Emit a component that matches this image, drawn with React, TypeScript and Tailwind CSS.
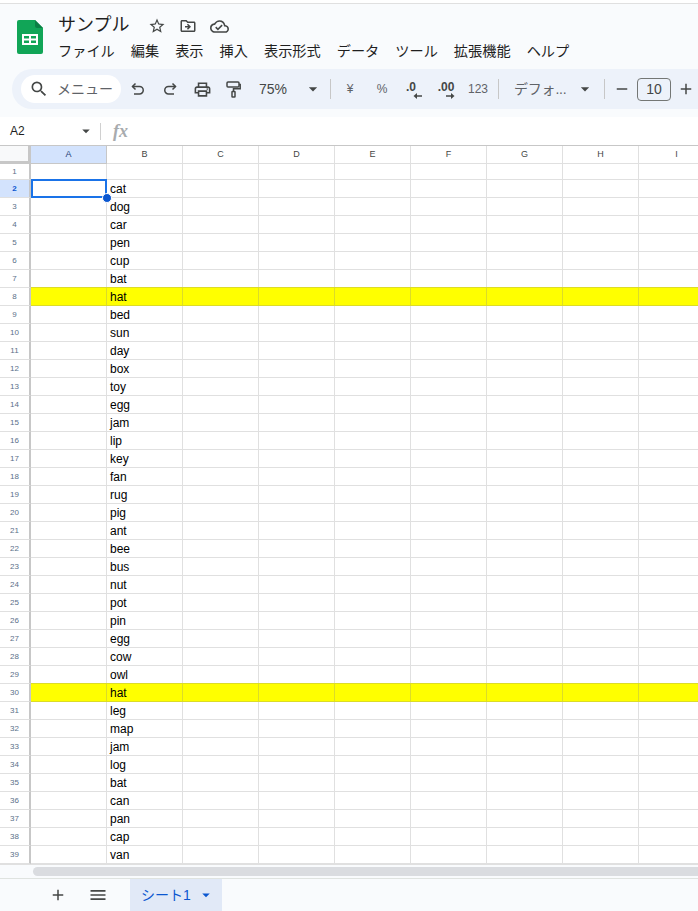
import React from 'react';
import {
  MdAdd,
  MdArrowDropDown,
  MdMenu,
  MdOutlineCloudDone,
  MdOutlineDriveFileMove,
  MdOutlineLocalPrintshop,
  MdRemove,
  MdSearch,
  MdStarBorder,
} from 'react-icons/md';

const words = [
  '', 'cat', 'dog', 'car', 'pen', 'cup', 'bat', 'hat', 'bed', 'sun', 'day', 'box', 'toy',
  'egg', 'jam', 'lip', 'key', 'fan', 'rug', 'pig', 'ant', 'bee', 'bus', 'nut', 'pot', 'pin',
  'egg', 'cow', 'owl', 'hat', 'leg', 'map', 'jam', 'log', 'bat', 'can', 'pan', 'cap', 'van',
];
const cols = ['C', 'D', 'E', 'F', 'G', 'H', 'I'];
const menus = ['ファイル', '編集', '表示', '挿入', '表示形式', 'データ', 'ツール', '拡張機能', 'ヘルプ'];

function SheetsLogo() {
  return (
    <svg width="26" height="34" viewBox="0 0 26 34" className="shrink-0">
      <path d="M2 0h16l8 8v24a2 2 0 0 1-2 2H2a2 2 0 0 1-2-2V2a2 2 0 0 1 2-2z" fill="#11a557" />
      <path d="M18 0l8 8h-6a2 2 0 0 1-2-2z" fill="#0b7f45" />
      <path d="M5 14h16v11H5z M7 16v2.500h5V16z M14 16v2.500h5V16z M7 20.500v2.500h5v-2.500z M14 20.500v2.500h5v-2.500z" fill="#fff" fillRule="evenodd" />
    </svg>
  );
}

function UndoIcon({ flip }: { flip?: boolean }) {
  return (
    <svg width="14" height="14" viewBox="0 0 14 14" fill="none" stroke="#444746" strokeWidth="1.500" className={flip ? '-scale-x-100' : ''}>
      <path d="M4.500 1.500 1.500 4.500l3 3" />
      <path d="M1.500 4.500h7a3.500 3.500 0 0 1 0 7.500H3" />
    </svg>
  );
}

function RollerIcon() {
  return (
    <svg width="16" height="17" viewBox="0 0 16 17" fill="none" stroke="#444746" strokeWidth="1.500">
      <rect x="1" y="1" width="12" height="5" rx="1" />
      <path d="M13 3.500h1.200v4.300H7.500v2.500" />
      <rect x="6" y="10.500" width="3" height="5.500" rx="0.500" />
    </svg>
  );
}

function ToolIcon({ children }: { children: React.ReactNode }) {
  return <div className="w-8 h-7 flex items-center justify-center text-[#444746] shrink-0">{children}</div>;
}

function Divider() {
  return <div className="w-px h-5 bg-[#c7c7c7] shrink-0" />;
}

function Toolbar() {
  return (
    <div className="ml-3 h-10 bg-[#edf2fa] rounded-l-[20px] flex items-center pl-[9px] text-[#444746] overflow-hidden">
      <div className="w-[100px] h-7 bg-white rounded-full flex items-center pl-[8px] shrink-0">
        <MdSearch size={20} />
        <span className="ml-[8px] text-[14px] text-[#5f6368] whitespace-nowrap">メニュー</span>
      </div>
      <div className="w-px shrink-0" />
      <ToolIcon><UndoIcon /></ToolIcon>
      <ToolIcon><UndoIcon flip /></ToolIcon>
      <ToolIcon><MdOutlineLocalPrintshop size={19} /></ToolIcon>
      <ToolIcon><RollerIcon /></ToolIcon>
      <div className="w-[80px] flex items-center shrink-0 pl-[9px]">
        <span className="text-[14px] w-[44px]">75%</span>
        <MdArrowDropDown size={20} />
      </div>
      <Divider />
      <div className="w-[3px] shrink-0" />
      <ToolIcon><span className="text-[12px] text-[#5f6368]">¥</span></ToolIcon>
      <ToolIcon><span className="text-[12px] text-[#5f6368]">%</span></ToolIcon>
      <ToolIcon>
        <span className="relative text-[12px] font-bold leading-none -mt-[5px] -ml-[6px] text-[#444746]">
          .0
          <svg width="9" height="6" viewBox="0 0 9 6" className="absolute left-[7px] top-[12px]">
            <path d="M9 3H3" stroke="#444746" strokeWidth="1.500" />
            <path d="M4 0 0.500 3 4 6z" fill="#444746" />
          </svg>
        </span>
      </ToolIcon>
      <ToolIcon>
        <span className="relative text-[12px] font-bold leading-none -mt-[5px] text-[#444746]">
          .00
          <svg width="9" height="6" viewBox="0 0 9 6" className="absolute left-[8px] top-[12px]">
            <path d="M0 3h6" stroke="#444746" strokeWidth="1.500" />
            <path d="M5 0 8.500 3 5 6z" fill="#444746" />
          </svg>
        </span>
      </ToolIcon>
      <ToolIcon><span className="text-[12px] text-[#5f6368]">123</span></ToolIcon>
      <div className="w-1 shrink-0" />
      <Divider />
      <div className="w-[15px] shrink-0" />
      <span className="text-[14px] w-[60px] whitespace-nowrap shrink-0 text-[#5f6368] tracking-[-0.2px]">デフォ...</span>
      <MdArrowDropDown size={20} className="shrink-0 ml-[1px]" />
      <div className="w-[9px] shrink-0" />
      <Divider />
      <div className="w-[8px] shrink-0" />
      <MdRemove size={18} className="shrink-0" />
      <div className="w-[6px] shrink-0" />
      <div className="w-[34px] h-[23px] border border-[#747775] rounded-[4px] flex items-center justify-center text-[14px] shrink-0">10</div>
      <div className="w-[6px] shrink-0" />
      <MdAdd size={18} className="shrink-0" />
    </div>
  );
}

function Row({ n, word }: { n: number; word: string }) {
  const yellow = word === 'hat';
  const selected = n === 2;
  const cell = yellow
    ? 'bg-[#ffff00] border-t border-[#dcdc28]'
    : 'bg-white border-[#e0e0e0]';
  return (
    <div className={`flex shrink-0 ${n === 1 ? 'h-[16px]' : yellow ? 'h-[19px] -mt-px' : 'h-[18px]'}`}>
      <div className={`w-[31px] shrink-0 self-end border-r-2 border-b border-r-[#c7c7c7] border-b-[#e0e0e0] flex items-center justify-center text-[8px] ${n === 1 ? 'h-[16px]' : 'h-[18px]'} ${selected ? 'bg-[#d3e3fd] font-bold text-[#0b57d0]' : 'bg-white text-[#5b7089]'}`}>
        {n}
      </div>
      <div className={`w-[76px] shrink-0 border-r border-b ${cell}`} />
      <div className={`w-[76px] shrink-0 border-r border-b pl-[3px] pt-[2px] text-[12px] leading-[15px] text-black ${cell}`}>
        {word}
      </div>
      {cols.map((c) => (
        <div key={c} className={`w-[76px] shrink-0 border-r border-b ${cell}`} />
      ))}
    </div>
  );
}

export default function App() {
  return (
    <div className="w-[698px] h-[911px] overflow-hidden flex flex-col bg-[#f9fbfd] font-['Liberation_Sans','Noto_Sans_CJK_JP',sans-serif] text-[#1f1f1f]">
      {/* top of the window */}
      <div className="h-[4px] shrink-0 bg-white border-b border-[#e0e0e0]" />

      {/* title + menu */}
      <div className="h-[65px] shrink-0 flex">
        <div className="pl-[17px] pt-[16px] w-[58px] shrink-0">
          <SheetsLogo />
        </div>
        <div className="flex flex-col">
          <div className="h-[32px] flex items-center pt-[10px]">
            <span className="text-[18px] leading-none w-[90px]">サンプル</span>
            <div className="flex items-center gap-[13px] text-[#444746] pt-[2px]">
              <MdStarBorder size={18} />
              <MdOutlineDriveFileMove size={18} />
              <MdOutlineCloudDone size={19} />
            </div>
          </div>
          <div className="flex gap-[16px] mt-[5px] text-[14.2px] leading-[20px] whitespace-nowrap">
            {menus.map((m) => (
              <span key={m}>{m}</span>
            ))}
          </div>
        </div>
      </div>

      <Toolbar />
      <div className="h-[8px] shrink-0" />

      {/* formula bar */}
      <div className="h-[29px] shrink-0 bg-white border-b border-[#c7c7c7] flex items-center">
        <span className="pl-[10px] w-[77px] text-[12px] text-[#1f1f1f]">A2</span>
        <MdArrowDropDown size={18} className="text-[#444746]" />
        <div className="w-px h-[17px] bg-[#d0d0d0] ml-[5px]" />
        <span className="ml-[12px] text-[18px] leading-none italic font-bold text-[#a8abae] font-['Liberation_Serif',serif]">fx</span>
      </div>

      {/* grid */}
      <div className="relative flex-1 min-h-0 bg-white flex flex-col overflow-hidden">
        <div className="flex h-[18px] shrink-0 text-[9px] text-[#444746]">
          <div className="w-[31px] shrink-0 bg-[#f8f9fa] border-r-[3px] border-b-[3px] border-[#c7c7c7]" />
          <div className="w-[76px] shrink-0 bg-[#d3e3fd] border-r border-b border-[#c7c7c7] flex items-center justify-center font-medium text-[#1f3f75]">A</div>
          <div className="w-[76px] shrink-0 border-r border-b border-[#e0e0e0] flex items-center justify-center">B</div>
          {cols.map((c) => (
            <div key={c} className="w-[76px] shrink-0 border-r border-b border-[#e0e0e0] flex items-center justify-center">{c}</div>
          ))}
        </div>
        {words.map((w, i) => (
          <Row key={i} n={i + 1} word={w} />
        ))}
        {/* selected cell */}
        <div className="absolute left-[31px] top-[33px] w-[76px] h-[19px] border-2 border-[#1a73e8]" />
        <div className="absolute left-[102px] top-[47px] w-[8px] h-[8px] rounded-full bg-[#0b57d0] border border-white box-content" />
      </div>

      {/* horizontal scrollbar */}
      <div className="h-[15px] shrink-0 bg-[#f9fbfd] border-t border-[#e0e0e0] border-b border-b-[#dfe3e0] flex items-center pl-[33px]">
        <div className="flex-1 h-[9px] rounded-l-full bg-[#dadce0]" />
      </div>

      {/* sheet tabs */}
      <div className="h-[32px] shrink-0 flex items-stretch">
        <div className="w-[43px]" />
        <div className="w-[30px] flex items-center justify-center text-[#444746]"><MdAdd size={18} /></div>
        <div className="w-[10px]" />
        <div className="w-[30px] flex items-center justify-center text-[#444746]"><MdMenu size={20} /></div>
        <div className="w-[17px]" />
        <div className="w-[92px] bg-[#e1e9f7] flex items-center pl-[11px] text-[#0b57d0]">
          <span className="text-[14px] w-[56px]">シート1</span>
          <MdArrowDropDown size={18} />
        </div>
      </div>
    </div>
  );
}
